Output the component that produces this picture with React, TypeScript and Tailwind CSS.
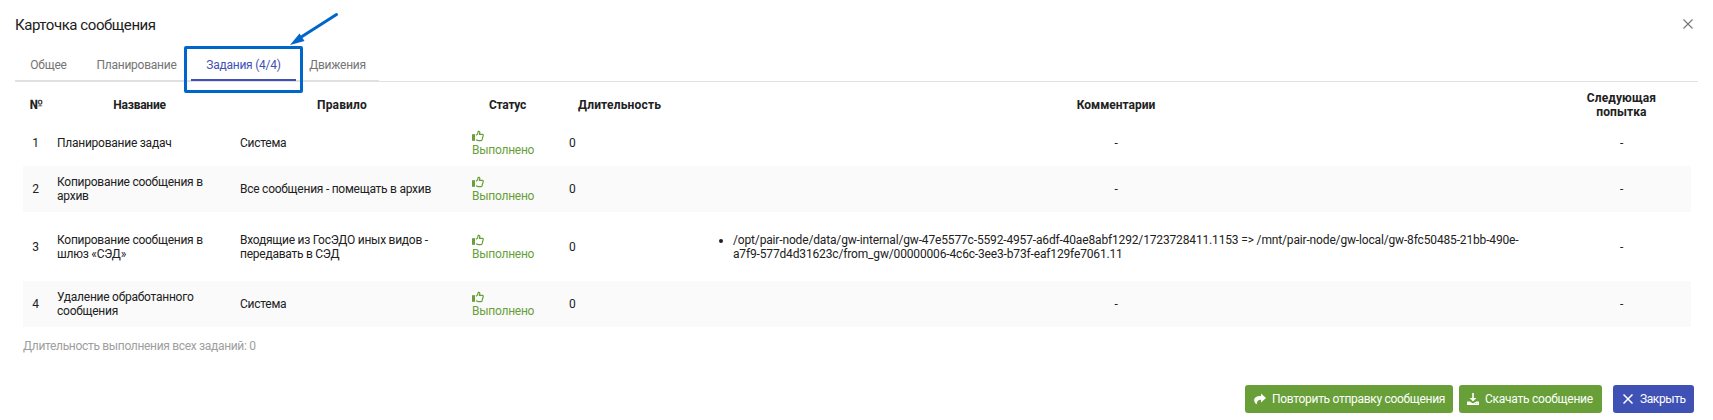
import { clsx } from 'clsx';

const tabs = [
  { label: 'Общее', width: 'w-[67px]' },
  { label: 'Планирование', width: 'w-[109px]' },
  { label: 'Задания (4/4)', width: 'w-[105px]', active: true },
  { label: 'Движения', width: 'w-[83px]' },
];

const tasks = [
  { id: 1, name: 'Планирование задач', rule: 'Система', height: 'h-[46px]' },
  { id: 2, name: 'Копирование сообщения в архив', rule: 'Все сообщения - помещать в архив', height: 'h-[46px]' },
  {
    id: 3,
    name: 'Копирование сообщения в шлюз «СЭД»',
    rule: 'Входящие из ГосЭДО иных видов - передавать в СЭД',
    comment:
      '/opt/pair-node/data/gw-internal/gw-47e5577c-5592-4957-a6df-40ae8abf1292/1723728411.1153 => /mnt/pair-node/gw-local/gw-8fc50485-21bb-490e-a7f9-577d4d31623c/from_gw/00000006-4c6c-3ee3-b73f-eaf129fe7061.11',
    height: 'h-[69px]',
  },
  { id: 4, name: 'Удаление обработанного сообщения', rule: 'Система', height: 'h-[46px]' },
];

const columns = 'grid grid-cols-[25px_183px_232px_97px_120px_872px_139px] items-center';

function ThumbIcon() {
  return (
    <svg width="12" height="12" viewBox="0 0 12 12" className="block" fill="none">
      <path d="M0 4.2h3v6.6H0z" fill="#689f38" />
      <path
        d="M4 5.2 5.6 3.9 6.2 1.4Q7.9 1 7.8 2.8L7.4 4.3H10.4Q11.5 4.5 11.2 5.6L10 9.9Q9.7 10.6 8.8 10.6H6.4L4 9.7"
        stroke="#689f38"
        strokeWidth="1.2"
        strokeLinejoin="round"
      />
    </svg>
  );
}

function ShareIcon() {
  return (
    <svg width="12" height="12" viewBox="0 0 12 12" fill="currentColor">
      <path d="M7 .4 12 4.9 7 9.4V6.8C4.4 6.7 3 7.8 2.7 11.2 1 10.2.2 8.7.2 7.2.2 4.4 2.8 3 7 3z" />
    </svg>
  );
}

function DownloadIcon() {
  return (
    <svg width="12" height="12" viewBox="0 0 12 12" fill="currentColor">
      <path d="M5.2 0h1.6v5h2.6L6 8.5 2.6 5h2.6z" />
      <path d="M0 8.5h2.8L6 10.4 9.2 8.5H12V12H0z" />
      <path d="M8.2 10.4h.8v.7h-.8zM9.8 10.4h.8v.7h-.8z" fill="#689f38" />
    </svg>
  );
}

function CrossIcon({ size, stroke }: { size: number; stroke: number }) {
  return (
    <svg width={size} height={size} viewBox="0 0 10 10" stroke="currentColor" strokeWidth={stroke}>
      <path d="M.5.5 9.5 9.5M9.5.5.5 9.5" />
    </svg>
  );
}

export default function App() {
  return (
    <div className="relative h-[420px] w-[1713px] overflow-hidden bg-white font-['Roboto',sans-serif] text-[12px] leading-[14px] tracking-[-0.25px] text-[#212121]">
      <header className="flex h-12 items-center justify-between pl-[15px] pr-5">
        <h1 className="pt-0.5 text-[15px] leading-5 tracking-[-0.43px]">Карточка сообщения</h1>
        <button className="text-[#757575]">
          <CrossIcon size={10} stroke={1.1} />
        </button>
      </header>

      <nav className="mx-[15px] flex h-[34px] border-b border-[#e0e0e0]">
        {tabs.map((tab) => (
          <button
            key={tab.label}
            className={clsx(
              'h-[33px] shrink-0 pt-[2px] text-center whitespace-nowrap',
              tab.width,
              tab.active
                ? 'border-b-2 border-[#3f51b5] text-[#3f51b5]'
                : 'border-b border-[#e0e0e0] pb-px text-[#757575]',
            )}
          >
            {tab.label}
          </button>
        ))}
      </nav>

      <main className="pl-[23px] pr-[22px] pt-[7px]">
        <div className={clsx(columns, 'h-[31px] text-center font-bold')}>
          <span className="pl-px text-[13px]">№</span>
          <span>Название</span>
          <span className="pr-2.5 tracking-[0.15px]">Правило</span>
          <span className="pr-2">Статус</span>
          <span className="pr-px tracking-[0.18px]">Длительность</span>
          <span className="tracking-normal">Комментарии</span>
          <span className="px-6 tracking-[0.1px]">Следующая попытка</span>
        </div>

        {tasks.map((task) => (
          <div key={task.id} className={clsx(columns, task.height, task.id % 2 === 0 && 'bg-[#fafafa]')}>
            <span className="text-center">{task.id}</span>
            <span className="px-[9px]">{task.name}</span>
            <span className="px-[9px]">{task.rule}</span>
            <div className="px-[9px] text-[#689f38]">
              <div className="flex h-[14px] items-center">
                <ThumbIcon />
              </div>
              Выполнено
            </div>
            <span className="px-[9px]">0</span>
            {task.comment ? (
              <ul className="list-disc pl-[53px] pr-6 tracking-[-0.155px]">
                <li>{task.comment}</li>
              </ul>
            ) : (
              <span className="text-center">-</span>
            )}
            <span className="text-center">-</span>
          </div>
        ))}

        <p className="mt-[12px] tracking-[-0.32px] text-[#9e9e9e]">Длительность выполнения всех заданий: 0</p>
      </main>

      <footer className="mt-8 flex justify-end pr-[19px] text-white">
        <button className="mr-1.5 flex h-7 w-[208px] items-center gap-[6px] rounded-[3px] bg-[#689f38] pl-[9px] tracking-[-0.3px] whitespace-nowrap">
          <ShareIcon />
          Повторить отправку сообщения
        </button>
        <button className="mr-[11px] flex h-7 w-[143px] items-center gap-1.5 rounded-[3px] bg-[#689f38] pl-2 tracking-[-0.25px] whitespace-nowrap">
          <DownloadIcon />
          Скачать сообщение
        </button>
        <button className="flex h-7 w-[81px] items-center gap-[7px] rounded-[3px] bg-[#3f51b5] pl-2.5 tracking-[-0.4px] whitespace-nowrap">
          <CrossIcon size={10} stroke={1.5} />
          Закрыть
        </button>
      </footer>

      {/* callout around the active tab */}
      <div className="absolute left-[184px] top-[46px] h-[47px] w-[119px] rounded-[2px] border-[3px] border-[#0066cc]" />
      <svg className="absolute left-[288px] top-[10px]" width="54" height="38" viewBox="0 0 54 38">
        <path d="M48.5 4.5 14 26.5" stroke="#0066cc" strokeWidth="3" strokeLinecap="round" />
        <path d="M2 35 11.5 23.5 16.5 31z" fill="#0066cc" />
      </svg>
    </div>
  );
}
